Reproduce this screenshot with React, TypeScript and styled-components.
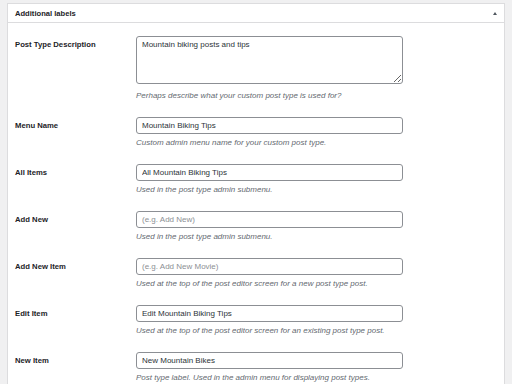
import * as React from 'react';
import styled, { createGlobalStyle } from 'styled-components';

const GlobalStyle = createGlobalStyle`
  html, body {
    margin: 0;
    padding: 0;
    background: #f0f0f1;
    overflow: hidden;
  }
  body {
    font-family: "Liberation Sans", Arial, sans-serif;
    color: #1d2327;
  }
`;

const Page = styled.div`
  width: 512px;
  height: 384px;
  padding: 3px 7px 0 7px;
  box-sizing: border-box;
  overflow: hidden;
`;

const Panel = styled.section`
  background: #fff;
  border: 1px solid #dcdcde;
  height: 420px;
`;

const PanelHeader = styled.header`
  height: 18px;
  display: flex;
  align-items: center;
  justify-content: space-between;
  padding: 0 7px 0 7px;
  border-bottom: 1px solid #dcdcde;
  font-size: 7.6px;
  font-weight: 600;
`;

const Toggle = styled.span`
  width: 0;
  height: 0;
  border-left: 2.5px solid transparent;
  border-right: 2.5px solid transparent;
  border-bottom: 3.5px solid #50575e;
`;

const Body = styled.div`
  padding: 13px 0 0 7px;
`;

const Row = styled.div`
  display: grid;
  grid-template-columns: 121px 267px;
  padding-bottom: 16px;
`;

const Label = styled.label<{ $top?: boolean }>`
  font-size: 7.7px;
  font-weight: 600;
  display: flex;
  align-items: ${(p) => (p.$top ? 'flex-start' : 'center')};
  height: ${(p) => (p.$top ? 'auto' : '17px')};
  padding-top: ${(p) => (p.$top ? '4px' : '0')};
`;

const Field = styled.div`
  display: flex;
  flex-direction: column;
`;

const Input = styled.input`
  height: 17px;
  box-sizing: border-box;
  border: 1px solid #8c8f94;
  border-radius: 3px;
  padding: 0 5px;
  font-family: inherit;
  font-size: 8px;
  color: #2c3338;
  outline: none;
  &::placeholder {
    color: #8c8f94;
  }
`;

const TextArea = styled.textarea`
  height: 48px;
  box-sizing: border-box;
  border: 1px solid #8c8f94;
  border-radius: 3px;
  padding: 3px 5px;
  font-family: inherit;
  font-size: 8px;
  color: #2c3338;
  resize: vertical;
  outline: none;
`;

const Hint = styled.p<{ $gap?: number }>`
  margin: ${(p) => p.$gap ?? 4}px 0 0;
  font-size: 8px;
  line-height: 10px;
  font-style: italic;
  color: #646970;
  white-space: nowrap;
`;

const rows = [
  {
    label: 'Menu Name',
    value: 'Mountain Biking Tips',
    hint: 'Custom admin menu name for your custom post type.',
  },
  {
    label: 'All Items',
    value: 'All Mountain Biking Tips',
    hint: 'Used in the post type admin submenu.',
  },
  {
    label: 'Add New',
    placeholder: '(e.g. Add New)',
    hint: 'Used in the post type admin submenu.',
  },
  {
    label: 'Add New Item',
    placeholder: '(e.g. Add New Movie)',
    hint: 'Used at the top of the post editor screen for a new post type post.',
  },
  {
    label: 'Edit Item',
    value: 'Edit Mountain Biking Tips',
    hint: 'Used at the top of the post editor screen for an existing post type post.',
  },
  {
    label: 'New Item',
    value: 'New Mountain Bikes',
    hint: 'Post type label. Used in the admin menu for displaying post types.',
  },
];

export default function App() {
  return (
    <Page>
      <GlobalStyle />
      <Panel>
        <PanelHeader>
          Additional labels
          <Toggle />
        </PanelHeader>
        <Body>
          <Row>
            <Label $top>Post Type Description</Label>
            <Field>
              <TextArea defaultValue="Mountain biking posts and tips" />
              <Hint $gap={7}>Perhaps describe what your custom post type is used for?</Hint>
            </Field>
          </Row>
          {rows.map((r) => (
            <Row key={r.label}>
              <Label>{r.label}</Label>
              <Field>
                <Input defaultValue={r.value} placeholder={r.placeholder} />
                <Hint>{r.hint}</Hint>
              </Field>
            </Row>
          ))}
        </Body>
      </Panel>
    </Page>
  );
}
